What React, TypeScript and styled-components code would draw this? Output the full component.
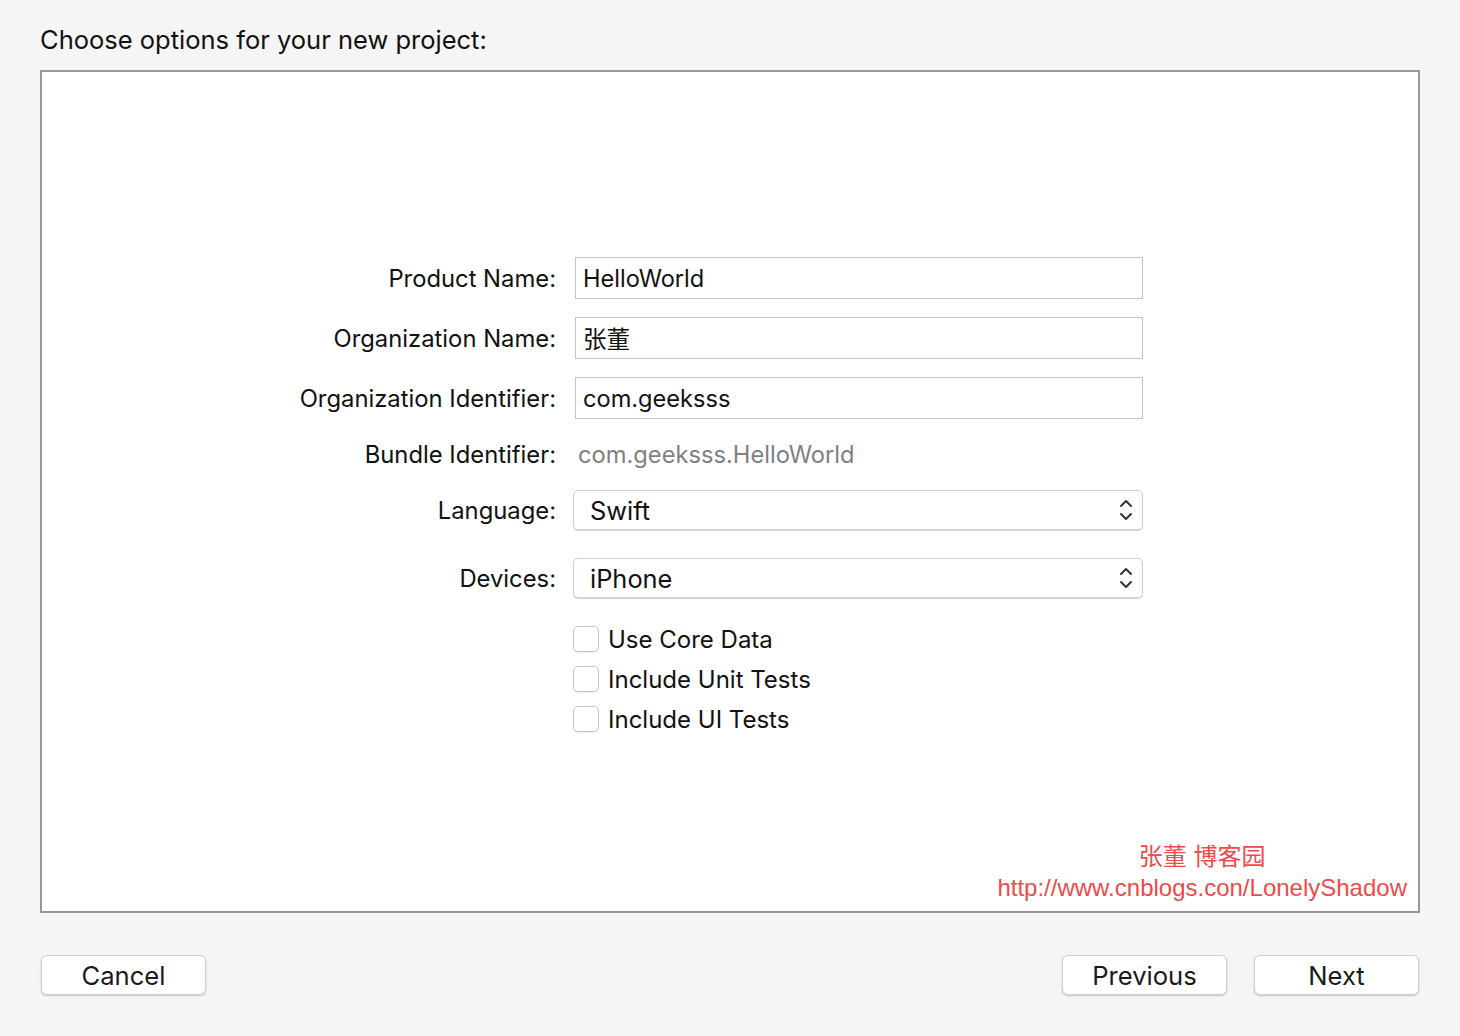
import React from 'react';
import styled, { createGlobalStyle } from 'styled-components';

const GlobalStyle = createGlobalStyle`
  html, body {
    margin: 0;
    padding: 0;
    background: #f5f5f5;
  }
  body {
    font-family: Inter, "Noto Sans CJK SC", sans-serif;
    color: #1a1a1a;
  }
`;

const Page = styled.div`
  width: 1460px;
  height: 1036px;
  box-sizing: border-box;
  padding: 22px 40px 0 40px;
  display: flex;
  flex-direction: column;
`;

const Title = styled.h1`
  margin: 0 0 12px 0;
  font-size: 25.5px;
  font-weight: normal;
  line-height: 36px;
  color: #111;
`;

const Panel = styled.div`
  height: 843px;
  box-sizing: border-box;
  background: #fff;
  border: 2px solid #979797;
  display: flex;
  flex-direction: column;
  padding: 185px 11px 8px 0;
`;

const Form = styled.div`
  display: grid;
  grid-template-columns: 514px 568px;
  column-gap: 19px;
  align-items: center;
`;

const Label = styled.div<{ $h: number; $mb?: number }>`
  height: ${p => p.$h}px;
  margin-bottom: ${p => p.$mb ?? 0}px;
  display: flex;
  align-items: center;
  justify-content: flex-end;
  font-size: 23.8px;
  color: #111;
`;

const Field = styled.div<{ $mb?: number }>`
  height: 42px;
  box-sizing: border-box;
  margin-bottom: ${p => p.$mb ?? 0}px;
  border: 1px solid #c3c3c3;
  padding: 0 7px;
  display: flex;
  align-items: center;
  font-size: 23.6px;
  color: #111;
`;

const StaticValue = styled.div<{ $mb?: number }>`
  height: 30px;
  margin-bottom: ${p => p.$mb ?? 0}px;
  padding-left: 3px;
  display: flex;
  align-items: center;
  font-size: 23.7px;
  color: #7f7f7f;
`;

const Popup = styled.div<{ $mb?: number }>`
  height: 40px;
  box-sizing: border-box;
  margin-left: -2px;
  margin-bottom: ${p => p.$mb ?? 0}px;
  border: 1px solid #cfcfcf;
  border-radius: 5px;
  box-shadow: 0 1px 1px rgba(0, 0, 0, 0.18);
  padding: 0 8px 0 16px;
  display: flex;
  align-items: center;
  justify-content: space-between;
  font-size: 25.4px;
  color: #111;
`;

const CheckRow = styled.label`
  height: 40px;
  margin-left: -2px;
  display: flex;
  align-items: center;
  gap: 9px;
  font-size: 24px;
  color: #111;
`;

const Box = styled.span`
  width: 26px;
  height: 26px;
  box-sizing: border-box;
  border: 1px solid #c4c4c4;
  border-radius: 5px;
  background: #fff;
  box-shadow: 0 1px 1px rgba(0, 0, 0, 0.08);
`;

const Watermark = styled.div`
  margin-top: auto;
  align-self: flex-end;
  display: flex;
  flex-direction: column;
  align-items: center;
  color: #ef4a4a;
  font-family: "Liberation Sans", "Noto Sans CJK SC", sans-serif;
  font-size: 24px;
  line-height: 31px;
`;

const Footer = styled.div`
  display: flex;
  align-items: center;
  justify-content: space-between;
  margin-top: 42px;
  padding: 0 1px;
`;

const ButtonGroup = styled.div`
  display: flex;
  gap: 27px;
`;

const Button = styled.button`
  width: 165px;
  height: 40px;
  box-sizing: border-box;
  background: #fff;
  border: 1px solid #d0d0d0;
  border-radius: 6px;
  box-shadow: 0 1px 2px rgba(0, 0, 0, 0.2);
  font-family: inherit;
  font-size: 25.6px;
  color: #1a1a1a;
  padding: 0;
`;

const Chevrons = () => (
  <svg width="16" height="26" viewBox="0 0 16 26" fill="none" stroke="#333" strokeWidth="2" strokeLinecap="round" strokeLinejoin="round">
    <path d="M3 9 L8 4 L13 9" />
    <path d="M3 17 L8 22 L13 17" />
  </svg>
);

export default function App() {
  return (
    <>
      <GlobalStyle />
      <Page>
        <Title>Choose options for your new project:</Title>
        <Panel>
          <Form>
            <Label $h={42} $mb={18}>Product Name:</Label>
            <Field $mb={18}>HelloWorld</Field>

            <Label $h={42} $mb={18}>Organization Name:</Label>
            <Field $mb={18}>张董</Field>

            <Label $h={42} $mb={20}>Organization Identifier:</Label>
            <Field $mb={20}>com.geeksss</Field>

            <Label $h={30} $mb={21}>Bundle Identifier:</Label>
            <StaticValue $mb={21}>com.geeksss.HelloWorld</StaticValue>

            <Label $h={40} $mb={28}>Language:</Label>
            <Popup $mb={28}>Swift<Chevrons /></Popup>

            <Label $h={40} $mb={21}>Devices:</Label>
            <Popup $mb={21}>iPhone<Chevrons /></Popup>

            <div />
            <CheckRow><Box />Use Core Data</CheckRow>
            <div />
            <CheckRow><Box />Include Unit Tests</CheckRow>
            <div />
            <CheckRow><Box />Include UI Tests</CheckRow>
          </Form>
          <Watermark>
            <span>张董 博客园</span>
            <span>http://www.cnblogs.con/LonelyShadow</span>
          </Watermark>
        </Panel>
        <Footer>
          <Button>Cancel</Button>
          <ButtonGroup>
            <Button>Previous</Button>
            <Button>Next</Button>
          </ButtonGroup>
        </Footer>
      </Page>
    </>
  );
}
